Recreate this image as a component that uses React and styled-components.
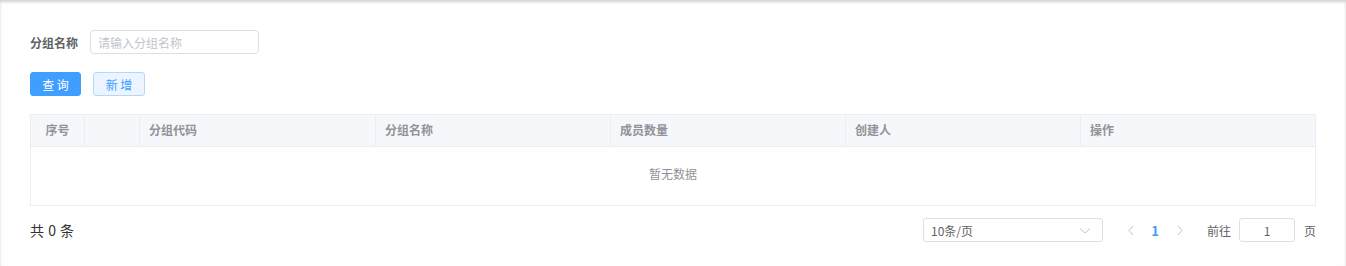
import React from "react";
import styled, { createGlobalStyle } from "styled-components";

const GlobalStyle = createGlobalStyle`
  body {
    margin: 0;
    font-family: "Noto Sans CJK SC", "Noto Sans", "Liberation Sans", sans-serif;
    background: #fff;
  }
`;

const Page = styled.div`
  min-height: 266px;
  box-sizing: border-box;
  padding: 30px 30px 0 30px;
  box-shadow: inset 0 2px 3px rgba(0, 0, 0, 0.18);
`;

const FilterRow = styled.div`
  display: flex;
  align-items: center;
  height: 24px;
`;

const Label = styled.span`
  font-size: 12px;
  font-weight: bold;
  color: #606266;
  margin-right: 12px;
`;

const TextInput = styled.input`
  width: 169px;
  height: 24px;
  box-sizing: border-box;
  border: 1px solid #dcdfe6;
  border-radius: 4px;
  padding: 0 7px;
  font-size: 12px;
  font-family: inherit;
  color: #606266;
  outline: none;
  &::placeholder {
    color: #c0c4cc;
  }
`;

const ButtonRow = styled.div`
  display: flex;
  gap: 12px;
  margin-top: 18px;
  height: 24px;
`;

const Button = styled.button`
  height: 24px;
  box-sizing: border-box;
  padding: 0;
  border-radius: 3px;
  font-size: 12px;
  font-family: inherit;
  white-space: nowrap;
  display: flex;
  align-items: center;
  justify-content: center;
  border: 1px solid ${(p) => (p.$primary ? "#409eff" : "#b3d8ff")};
  background: ${(p) => (p.$primary ? "#409eff" : "#ecf5ff")};
  color: ${(p) => (p.$primary ? "#fff" : "#409eff")};
  width: ${(p) => p.$width}px;
`;

const Table = styled.div`
  margin-top: 18px;
  border: 1px solid #ebeef5;
`;

const HeaderRow = styled.div`
  display: grid;
  grid-template-columns: 54px 55px 236px 235px 235px 235px 1fr;
  height: 31px;
  background: #f5f7fa;
  border-bottom: 1px solid #ebeef5;
`;

const HeaderCell = styled.div`
  display: flex;
  align-items: center;
  justify-content: ${(p) => (p.$center ? "center" : "flex-start")};
  padding-left: ${(p) => (p.$center ? 0 : 9)}px;
  padding-bottom: 3px;
  font-size: 12px;
  font-weight: bold;
  color: #909399;
  border-right: 1px solid #ebeef5;
  &:last-child {
    border-right: none;
  }
`;

const Empty = styled.div`
  height: 58px;
  box-sizing: border-box;
  padding-bottom: 5px;
  display: flex;
  align-items: center;
  justify-content: center;
  font-size: 12px;
  color: #909399;
`;

const Footer = styled.div`
  display: flex;
  align-items: center;
  margin-top: 12px;
  height: 24px;
`;

const Total = styled.span`
  font-size: 14px;
  color: #303133;
  margin-right: auto;
  word-spacing: 1px;
`;

const Select = styled.div`
  width: 180px;
  height: 24px;
  box-sizing: border-box;
  border: 1px solid #dcdfe6;
  border-radius: 3px;
  display: flex;
  align-items: center;
  justify-content: space-between;
  padding: 0 10px 0 7px;
  font-size: 12px;
  color: #606266;
`;

const Pager = styled.div`
  display: flex;
  align-items: center;
  margin-left: 16px;
`;

const Arrow = styled.span`
  width: 24px;
  display: flex;
  justify-content: center;
  color: #c0c4cc;
`;

const PageNum = styled.span`
  width: 24px;
  text-align: center;
  font-size: 13px;
  font-weight: bold;
  color: #409eff;
`;

const Jump = styled.div`
  display: flex;
  align-items: center;
  margin-left: 16px;
  font-size: 12px;
  color: #606266;
`;

const JumpInput = styled.div`
  width: 56px;
  height: 24px;
  box-sizing: border-box;
  border: 1px solid #dcdfe6;
  border-radius: 3px;
  margin: 0 9px 0 8px;
  display: flex;
  align-items: center;
  justify-content: center;
  color: #606266;
`;

const Chevron = ({ dir }) => {
  const d = {
    down: "M2 4.5 L7 9 L12 4.5",
    left: "M8 2 L4 6.5 L8 11",
    right: "M5 2 L9 6.5 L5 11",
  }[dir];
  const w = dir === "down" ? 14 : 12;
  return (
    <svg width={w} height="13" viewBox={`0 0 ${w} 13`} fill="none">
      <path d={d} stroke="#c0c4cc" strokeWidth="1" />
    </svg>
  );
};

const columns = ["序号", "", "分组代码", "分组名称", "成员数量", "创建人", "操作"];

export default function App() {
  return (
    <>
      <GlobalStyle />
      <Page>
        <FilterRow>
          <Label>分组名称</Label>
          <TextInput placeholder="请输入分组名称" />
        </FilterRow>
        <ButtonRow>
          <Button $primary $width={51}>查 询</Button>
          <Button $width={52}>新 增</Button>
        </ButtonRow>
        <Table>
          <HeaderRow>
            {columns.map((c, i) => (
              <HeaderCell key={i} $center={i === 0}>
                {c}
              </HeaderCell>
            ))}
          </HeaderRow>
          <Empty>暂无数据</Empty>
        </Table>
        <Footer>
          <Total>共 0 条</Total>
          <Select>
            <span>10条/页</span>
            <Chevron dir="down" />
          </Select>
          <Pager>
            <Arrow>
              <Chevron dir="left" />
            </Arrow>
            <PageNum>1</PageNum>
            <Arrow>
              <Chevron dir="right" />
            </Arrow>
          </Pager>
          <Jump>
            前往
            <JumpInput>1</JumpInput>页
          </Jump>
        </Footer>
      </Page>
    </>
  );
}
